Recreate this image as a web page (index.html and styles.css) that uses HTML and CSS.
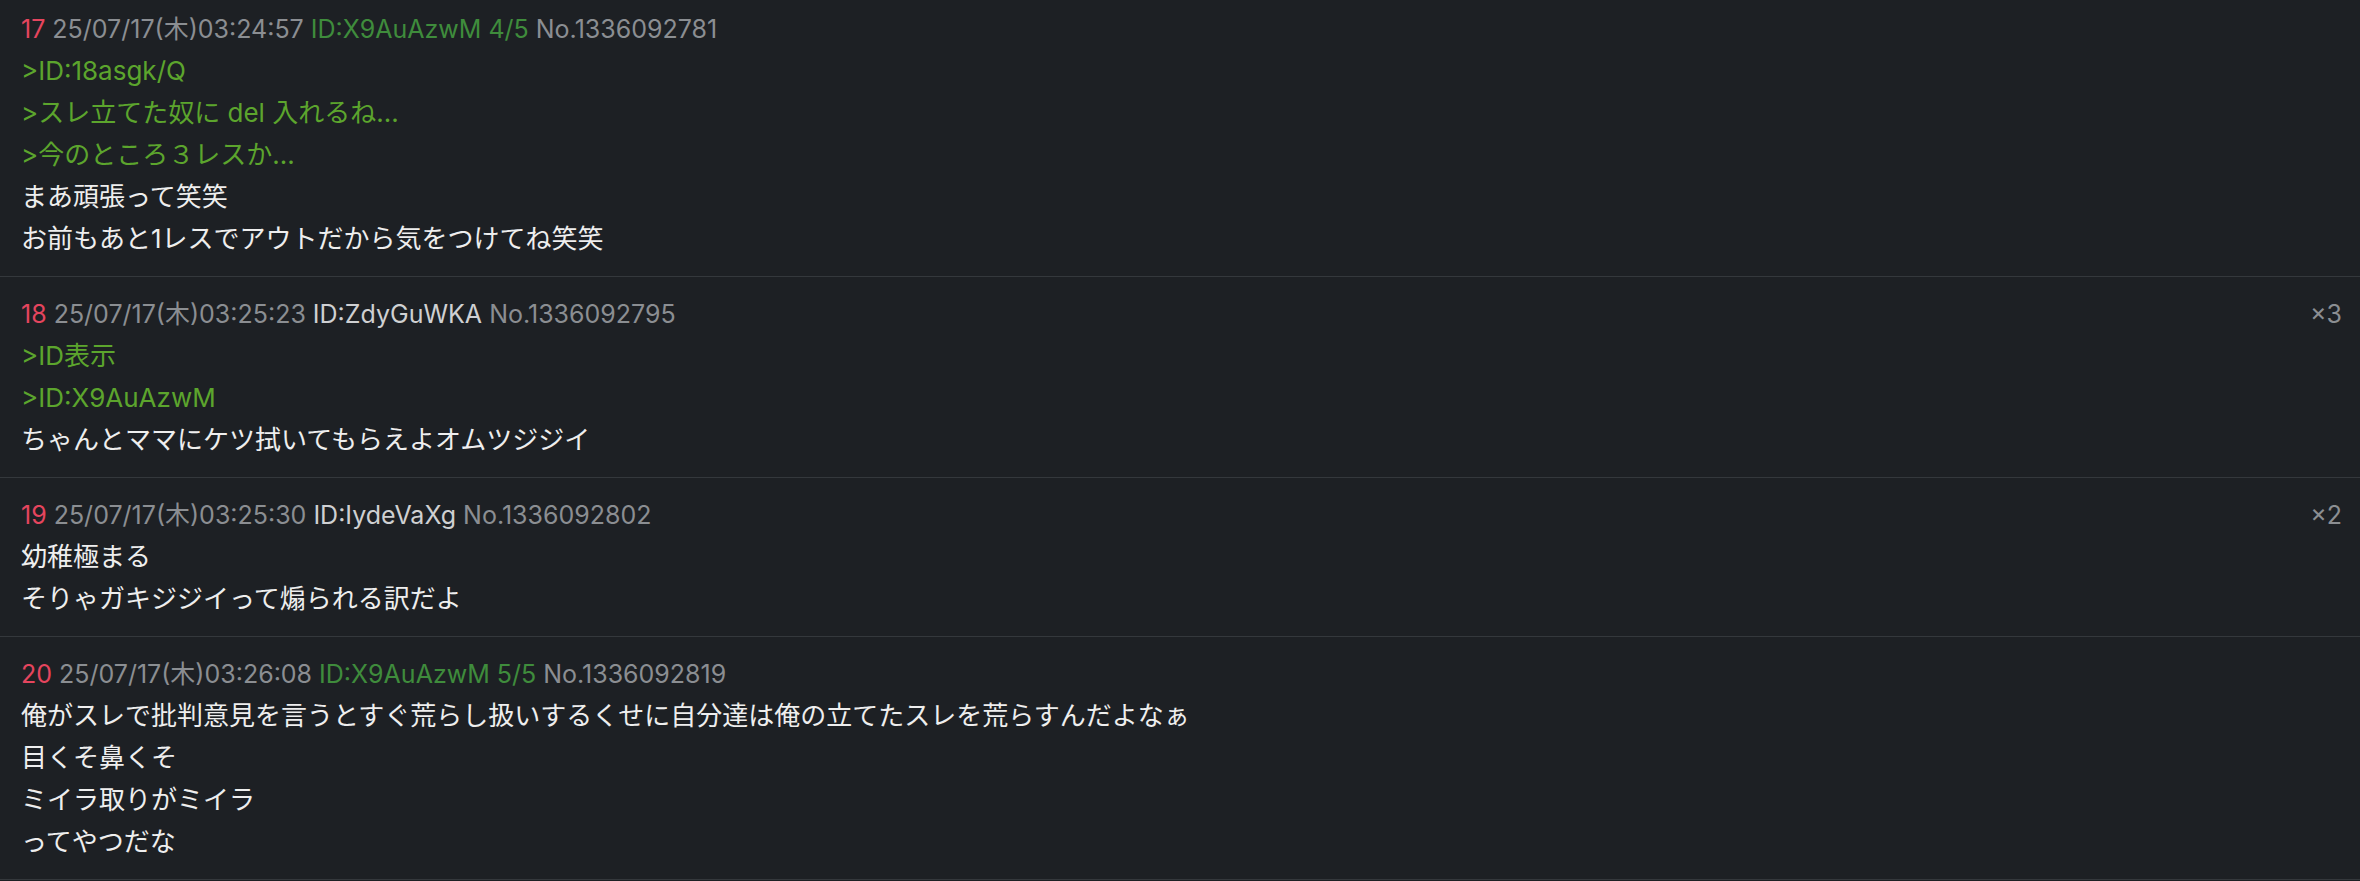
FILE: index.html
```html
<!DOCTYPE html>
<html lang="ja">
<head>
  <meta charset="UTF-8" />
  <title>レス一覧</title>
  <link rel="stylesheet" href="styles.css">
</head>
<body>
  <div class="thread">
    <div class="res first">
      <div class="head">
        <span class="num">17</span>
        <span class="date">25/07/17(木)03:24:57</span>
        <span class="id-hot">ID:X9AuAzwM 4/5</span>
        <span class="no">No.1336092781</span>
      </div>
      <div class="quote">&gt;ID:18asgk/Q</div>
      <div class="quote">&gt;スレ立てた奴に del 入れるね...</div>
      <div class="quote">&gt;今のところ３レスか...</div>
      <div class="line">まあ頑張って笑笑</div>
      <div class="line">お前もあと1レスでアウトだから気をつけてね笑笑</div>
    </div>

    <div class="res">
      <div class="head">
        <span class="num">18</span>
        <span class="date">25/07/17(木)03:25:23</span>
        <span class="id">ID:ZdyGuWKA</span>
        <span class="no">No.1336092795</span>
        <span class="refs">×3</span>
      </div>
      <div class="quote">&gt;ID表示</div>
      <div class="quote">&gt;ID:X9AuAzwM</div>
      <div class="line">ちゃんとママにケツ拭いてもらえよオムツジジイ</div>
    </div>

    <div class="res">
      <div class="head">
        <span class="num">19</span>
        <span class="date">25/07/17(木)03:25:30</span>
        <span class="id">ID:IydeVaXg</span>
        <span class="no">No.1336092802</span>
        <span class="refs">×2</span>
      </div>
      <div class="line">幼稚極まる</div>
      <div class="line">そりゃガキジジイって煽られる訳だよ</div>
    </div>

    <div class="res">
      <div class="head">
        <span class="num">20</span>
        <span class="date">25/07/17(木)03:26:08</span>
        <span class="id-hot">ID:X9AuAzwM 5/5</span>
        <span class="no">No.1336092819</span>
      </div>
      <div class="line">俺がスレで批判意見を言うとすぐ荒らし扱いするくせに自分達は俺の立てたスレを荒らすんだよなぁ</div>
      <div class="line">目くそ鼻くそ</div>
      <div class="line">ミイラ取りがミイラ</div>
      <div class="line">ってやつだな</div>
    </div>
  </div>
</body>
</html>
```

FILE: styles.css
```css
body {
  margin: 0;
  background: #1d2024;
  color: #eeeeee;
  font-family: Inter, "Noto Sans CJK JP", sans-serif;
  font-size: 26px;
  overflow: hidden;
}
.thread {
  margin-top: -8px;
}
.res {
  padding: 16px 18px 16px 21px;
  border-bottom: 1px solid #34383c;
  line-height: 42px;
}
.head {
  display: flex;
  gap: 7px;
  font-size: 25px;
  color: #8b8e92;
}
.num {
  color: #e5455e;
}
.id {
  color: #cfd0d2;
}
.id-hot {
  color: #3f8c3c;
}
.refs {
  margin-left: auto;
}
.quote {
  color: #5ca52d;
}
.line {
  color: #eeeeee;
}
```
